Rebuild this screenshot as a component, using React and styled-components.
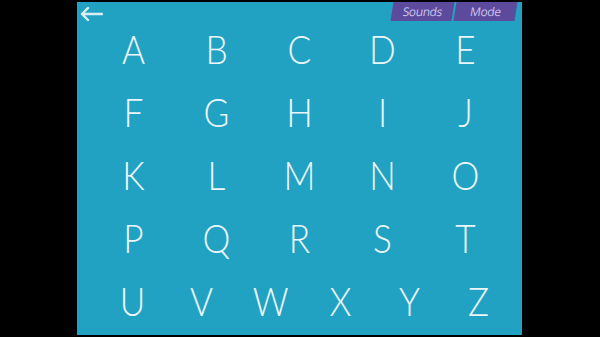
import React from "react";
import styled, { createGlobalStyle } from "styled-components";

const GlobalStyle = createGlobalStyle`
  html, body {
    margin: 0;
    padding: 0;
    background: #000;
  }
  body {
    font-family: "Lato", "Open Sans", sans-serif;
  }
`;

const Screen = styled.div`
  width: 600px;
  height: 337px;
  background: #000;
  display: flex;
  padding: 2px 0 0 77px;
  box-sizing: border-box;
`;

const Board = styled.div`
  width: 445px;
  height: 333px;
  background: #22a2c2;
  display: flex;
  flex-direction: column;
`;

const TopBar = styled.div`
  height: 15px;
  display: flex;
  align-items: flex-start;
  justify-content: space-between;
  padding: 0 6px 0 3px;
`;

const BackButton = styled.button`
  background: none;
  border: none;
  padding: 5px 0 0;
  margin: 0;
  cursor: pointer;
  display: flex;
`;

const Tabs = styled.div`
  display: flex;
  gap: 2px;
  position: relative;
  z-index: 1;
`;

const Tab = styled.div`
  width: 61px;
  height: 19px;
  background: #5c4b9d;
  transform: skewX(-9deg);
  display: flex;
  align-items: center;
  justify-content: center;
  color: #c9c2ea;
  font-family: "Open Sans", sans-serif;
  font-size: 12px;
  letter-spacing: -0.4px;
`;

const Grid = styled.div`
  display: grid;
  grid-template-columns: repeat(${(p) => p.$cols}, ${(p) => p.$cell}px);
  grid-auto-rows: 63px;
  padding-left: ${(p) => p.$left}px;
`;

const Letter = styled.div`
  display: flex;
  align-items: center;
  justify-content: center;
  color: #eaf6fa;
  font-family: "Lato", sans-serif;
  font-weight: 300;
  font-size: 40px;
  line-height: 1;
  transform: scaleX(0.88);
`;

const rows = ["ABCDE", "FGHIJ", "KLMNO", "PQRST"];

export default function App() {
  return (
    <>
      <GlobalStyle />
      <Screen>
        <Board>
          <TopBar>
            <BackButton aria-label="Back">
              <svg width="23" height="14" viewBox="0 0 23 14">
                <path
                  d="M22 7H2M8 1L2 7l6 6"
                  fill="none"
                  stroke="#d9eff6"
                  strokeWidth="2.4"
                  strokeLinecap="round"
                  strokeLinejoin="round"
                />
              </svg>
            </BackButton>
            <Tabs>
              <Tab>Sounds</Tab>
              <Tab>Mode</Tab>
            </Tabs>
          </TopBar>
          <Grid $cols={5} $cell={83} $left={15}>
            {rows.join("").split("").map((ch) => (
              <Letter key={ch}>{ch}</Letter>
            ))}
          </Grid>
          <Grid $cols={6} $cell={69.2} $left={21}>
            {"UVWXYZ".split("").map((ch) => (
              <Letter key={ch}>{ch}</Letter>
            ))}
          </Grid>
        </Board>
      </Screen>
    </>
  );
}
